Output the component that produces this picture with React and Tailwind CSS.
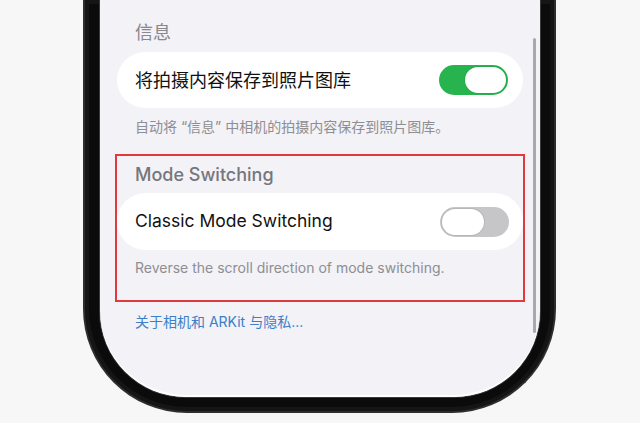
import React from 'react';

const font = { fontFamily: 'Inter, "Noto Sans CJK SC", sans-serif' };

function Toggle({ on }) {
  if (on) {
    return (
      <div className="w-[69px] h-[30px] rounded-full bg-[#27b44f] p-[2px] flex justify-end shrink-0">
        <div className="w-[41px] h-[26px] rounded-full bg-white shadow-[0_0_0_1px_rgba(0,0,0,0.06)]" />
      </div>
    );
  }
  return (
    <div className="w-[69px] h-[30px] rounded-full bg-[#c6c6c8] p-[2px] flex justify-start shrink-0">
      <div className="w-[42px] h-[26px] rounded-full bg-white shadow-[0_0_0_1px_rgba(0,0,0,0.08)]" />
    </div>
  );
}

export default function App() {
  return (
    <div className="w-[640px] h-[423px] bg-[#f7f7f7] overflow-hidden" style={font}>
      <div className="ml-[83px] w-[473px] h-[413px] bg-[#0b0b0b] rounded-b-[104px] border-x-2 border-b-2 border-[#2e2e2e] pl-[15px] pr-[14px] pb-[14px] flex shadow-[inset_0_0_0_4px_#151515]">
        <div className="relative flex-1 bg-[#f2f2f7] rounded-b-[86px] overflow-hidden px-[15px] pt-[21px] ring-1 ring-[#3a3a3a] shadow-[inset_0_-2px_0_rgba(255,255,255,0.9)]">
          {/* scroll indicator */}
          <div className="absolute right-[4px] top-[38px] w-[3px] h-[295px] rounded-full bg-[#a9a9ac]" />

          <div className="mx-[2px]">
            <div className="px-[18px] h-[24px] leading-[24px] text-[18px] text-[#87878c]">信息</div>
            <div className="mt-[7px] h-[56px] rounded-full bg-white flex items-center justify-between pl-[18px] pr-[15px]">
              <span className="text-[18px] text-[#111]">将拍摄内容保存到照片图库</span>
              <Toggle on />
            </div>
            <div className="mt-[10px] px-[18px] h-[18px] leading-[18px] text-[14px] text-[#8e8e93]">
              自动将 “信息” 中相机的拍摄内容保存到照片图库。
            </div>
          </div>

          <div className="mt-[18px] border-2 border-[#e2393f] pt-[7px] pb-[23px]">
            <div className="px-[18px] h-[24px] leading-[24px] text-[18px] font-medium text-[#76767b]">Mode Switching</div>
            <div className="mt-[6px] h-[57px] rounded-full bg-white flex items-center justify-between pl-[18px] pr-[14px]">
              <span className="text-[17.5px] text-[#111]">Classic Mode Switching</span>
              <Toggle on={false} />
            </div>
            <div className="mt-[9px] px-[18px] h-[18px] leading-[18px] text-[14px] text-[#8e8e93]">
              Reverse the scroll direction of mode switching.
            </div>
          </div>

          <div className="mt-[10px] mx-[2px] px-[18px] h-[20px] leading-[20px] text-[14px] text-[#3a80c9]">
            关于相机和 ARKit 与隐私...
          </div>
        </div>
      </div>
    </div>
  );
}
